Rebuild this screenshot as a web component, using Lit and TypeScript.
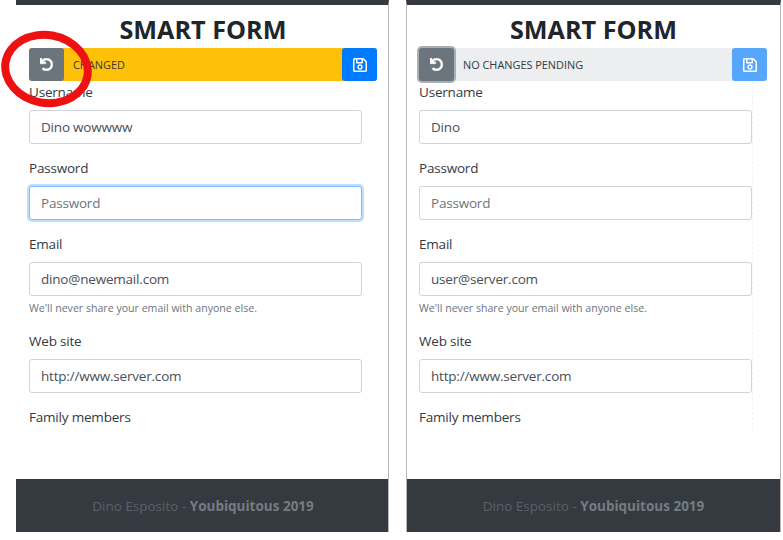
import { LitElement, html, css, svg } from 'lit';
import { customElement, property } from 'lit/decorators.js';

const undoIcon = svg`<path d="M212.333 224.333H12c-6.627 0-12-5.373-12-12V12C0 5.373 5.373 0 12 0h48c6.627 0 12 5.373 12 12v78.112C117.773 39.279 184.26 7.47 258.175 8.007c136.906.994 246.448 111.623 246.157 248.532C504.041 393.258 393.12 504 256.333 504c-64.089 0-122.496-24.313-166.51-64.215-5.099-4.622-5.334-12.554-.467-17.42l33.967-33.967c4.474-4.474 11.662-4.717 16.401-.525C170.76 415.336 211.58 432 256.333 432c97.268 0 176-78.716 176-176 0-97.267-78.716-176-176-176-58.496 0-110.28 28.476-142.274 72.333h98.274c6.627 0 12 5.373 12 12v48c0 6.627-5.373 12-12 12z"/>`;
const saveIcon = svg`<path d="M433.941 129.941l-83.882-83.882A48 48 0 0 0 316.118 32H48C21.49 32 0 53.49 0 80v352c0 26.51 21.49 48 48 48h352c26.51 0 48-21.49 48-48V163.882a48 48 0 0 0-14.059-33.941zM272 80v80H144V80h128zm122 352H54a6 6 0 0 1-6-6V86a6 6 0 0 1 6-6h42v104c0 13.255 10.745 24 24 24h176c13.255 0 24-10.745 24-24V83.882l78.243 78.243a6 6 0 0 1 1.757 4.243V426a6 6 0 0 1-6 6zM224 232c-48.523 0-88 39.477-88 88s39.477 88 88 88 88-39.477 88-88-39.477-88-88-88zm0 128c-22.056 0-40-17.944-40-40s17.944-40 40-40 40 17.944 40 40-17.944 40-40 40z"/>`;

@customElement('smart-form')
export class SmartForm extends LitElement {
  @property({ type: Boolean }) changed = false;
  @property() username = '';
  @property() email = '';

  static styles = css`
    :host {
      display: flex;
      flex-direction: column;
      position: relative;
      box-sizing: border-box;
      height: 532px;
      width: 373px;
      border-top: 5px solid #343a40;
      border-right: 1px solid #b8b8b8;
      font-family: "Open Sans", sans-serif;
      color: #343a40;
      background: #fff;
    }
    :host([bordered]) {
      border-left: 1px solid #b8b8b8;
      width: 375px;
    }
    h1 {
      margin: 0;
      height: 43px;
      padding: 7px 0 0 2px;
      box-sizing: border-box;
      font-size: 25.2px;
      line-height: 34px;
      font-weight: 700;
      text-align: center;
      color: #212529;
    }
    :host([bordered]) h1 {
      padding-left: 0;
    }
    .bar {
      display: flex;
      align-items: center;
      height: 33px;
      margin: 0 11px 0 13px;
      border-radius: 3px;
      background: #eceeef;
      font-size: 10.9px;
      color: #343a40;
    }
    :host([bordered]) .bar {
      margin: 0 13px 0 12px;
    }
    .bar.changed {
      background: #ffc107;
    }
    .bar span {
      flex: 1;
      padding-left: 9px;
    }
    button {
      display: flex;
      align-items: center;
      justify-content: center;
      width: 35px;
      height: 33px;
      padding: 0;
      border: 0;
      border-radius: 3px;
      color: #fff;
    }
    .undo svg {
      width: 13px;
      height: 13px;
      fill: currentColor;
      stroke: currentColor;
      stroke-width: 24;
    }
    .save svg {
      width: 14px;
      height: 16px;
      fill: currentColor;
    }
    .undo {
      background: #6c757d;
    }
    .bar:not(.changed) .undo {
      box-shadow: 0 0 0 2px #a9afb4;
    }
    .save {
      background: #007bff;
    }
    .bar:not(.changed) .save {
      background: #56a6fb;
    }
    form {
      height: 349px;
      margin: 0 25px 0 13px;
      padding-top: 1px;
      box-sizing: border-box;
    }
    :host([bordered]) form {
      margin: 0 27px 0 12px;
      border-right: 1px dashed #f2f2f2;
    }
    label {
      display: block;
      height: 28px;
      font-size: 13.5px;
      line-height: 20px;
      letter-spacing: -0.2px;
    }
    input {
      display: block;
      box-sizing: border-box;
      width: 333px;
      height: 34px;
      margin-bottom: 14px;
      padding: 0 11px;
      border: 1px solid #ced4da;
      border-radius: 3px;
      background: #fff;
      font: 13.5px "Open Sans", sans-serif;
      letter-spacing: -0.2px;
      color: #495057;
      outline: none;
    }
    input::placeholder {
      color: #6c757d;
      opacity: 1;
    }
    input.focus {
      border-color: #80bdff;
      box-shadow: 0 0 0 2px rgba(0, 123, 255, 0.25);
    }
    input.hinted {
      margin-bottom: 4px;
    }
    small {
      display: block;
      height: 31px;
      font-size: 10.6px;
      line-height: 16px;
      color: #6c757d;
    }
    footer {
      height: 53px;
      margin-top: auto;
      padding-left: 2px;
      background: #343a40;
      color: #5a6168;
      font-size: 13.5px;
      line-height: 54px;
      text-align: center;
    }
    :host([bordered]) footer {
      padding-left: 0;
    }
    footer b {
      color: #757c83;
    }
    .ring {
      position: absolute;
      left: -15px;
      top: 26px;
      width: 91px;
      height: 76px;
      box-sizing: border-box;
      border: 8px solid #ee1111;
      border-radius: 50%;
      transform: rotate(10deg);
    }
  `;

  render() {
    return html`
      <h1>SMART FORM</h1>
      <div class="bar ${this.changed ? 'changed' : ''}">
        <button class="undo" type="button"><svg viewBox="0 0 512 512">${undoIcon}</svg></button>
        <span>${this.changed ? 'CHANGED' : 'NO CHANGES PENDING'}</span>
        <button class="save" type="button"><svg viewBox="0 0 448 512">${saveIcon}</svg></button>
      </div>
      <form>
        <label>Username</label>
        <input .value=${this.username} />
        <label>Password</label>
        <input class=${this.changed ? 'focus' : ''} placeholder="Password" />
        <label>Email</label>
        <input class="hinted" .value=${this.email} />
        <small>We'll never share your email with anyone else.</small>
        <label>Web site</label>
        <input value="http://www.server.com" />
        <label>Family members</label>
      </form>
      <footer>Dino Esposito - <b>Youbiquitous 2019</b></footer>
      ${this.changed ? html`<div class="ring"></div>` : ''}
    `;
  }
}

@customElement('app-root')
export class AppRoot extends LitElement {
  static styles = css`
    :host {
      display: flex;
      gap: 17px;
      padding-left: 16px;
      height: 540px;
      overflow: hidden;
      background: #fff;
    }
  `;

  render() {
    return html`
      <smart-form changed username="Dino wowwww" email="dino@newemail.com"></smart-form>
      <smart-form bordered username="Dino" email="user@server.com"></smart-form>
    `;
  }
}
